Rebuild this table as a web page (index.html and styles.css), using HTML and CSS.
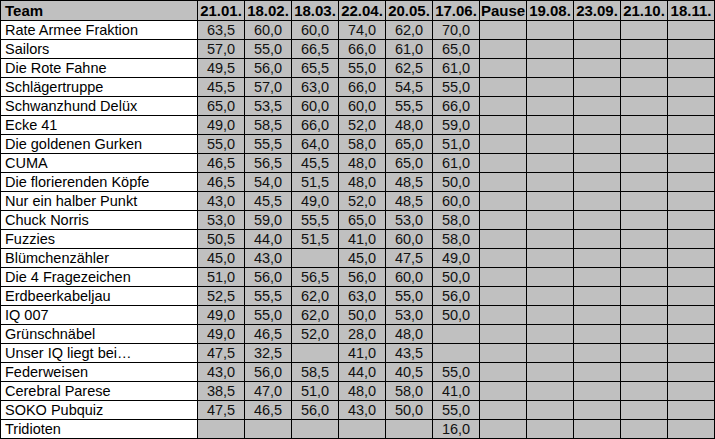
FILE: index.html
```html
<!DOCTYPE html>
<html lang="de">
<head>
<meta charset="utf-8">
<title>Tabelle</title>
<link rel="stylesheet" href="styles.css">
</head>
<body>
<table class="scores">
<colgroup>
<col class="c-team">
<col class="c-num"><col class="c-num"><col class="c-num"><col class="c-num"><col class="c-num"><col class="c-num">
<col class="c-num"><col class="c-num"><col class="c-num"><col class="c-num"><col class="c-num">
</colgroup>
<thead>
<tr class="head">
<th class="team">Team</th><th>21.01.</th><th>18.02.</th><th>18.03.</th><th>22.04.</th><th>20.05.</th><th>17.06.</th><th>Pause</th><th>19.08.</th><th>23.09.</th><th>21.10.</th><th>18.11.</th>
</tr>
</thead>
<tbody>
<tr><td class="team">Rate Armee Fraktion</td><td>63,5</td><td>60,0</td><td>60,0</td><td>74,0</td><td>62,0</td><td>70,0</td><td></td><td></td><td></td><td></td><td></td></tr>
<tr><td class="team">Sailors</td><td>57,0</td><td>55,0</td><td>66,5</td><td>66,0</td><td>61,0</td><td>65,0</td><td></td><td></td><td></td><td></td><td></td></tr>
<tr><td class="team">Die Rote Fahne</td><td>49,5</td><td>56,0</td><td>65,5</td><td>55,0</td><td>62,5</td><td>61,0</td><td></td><td></td><td></td><td></td><td></td></tr>
<tr><td class="team">Schlägertruppe</td><td>45,5</td><td>57,0</td><td>63,0</td><td>66,0</td><td>54,5</td><td>55,0</td><td></td><td></td><td></td><td></td><td></td></tr>
<tr><td class="team">Schwanzhund Delüx</td><td>65,0</td><td>53,5</td><td>60,0</td><td>60,0</td><td>55,5</td><td>66,0</td><td></td><td></td><td></td><td></td><td></td></tr>
<tr><td class="team">Ecke 41</td><td>49,0</td><td>58,5</td><td>66,0</td><td>52,0</td><td>48,0</td><td>59,0</td><td></td><td></td><td></td><td></td><td></td></tr>
<tr><td class="team">Die goldenen Gurken</td><td>55,0</td><td>55,5</td><td>64,0</td><td>58,0</td><td>65,0</td><td>51,0</td><td></td><td></td><td></td><td></td><td></td></tr>
<tr><td class="team">CUMA</td><td>46,5</td><td>56,5</td><td>45,5</td><td>48,0</td><td>65,0</td><td>61,0</td><td></td><td></td><td></td><td></td><td></td></tr>
<tr><td class="team">Die florierenden Köpfe</td><td>46,5</td><td>54,0</td><td>51,5</td><td>48,0</td><td>48,5</td><td>50,0</td><td></td><td></td><td></td><td></td><td></td></tr>
<tr><td class="team">Nur ein halber Punkt</td><td>43,0</td><td>45,5</td><td>49,0</td><td>52,0</td><td>48,5</td><td>60,0</td><td></td><td></td><td></td><td></td><td></td></tr>
<tr><td class="team">Chuck Norris</td><td>53,0</td><td>59,0</td><td>55,5</td><td>65,0</td><td>53,0</td><td>58,0</td><td></td><td></td><td></td><td></td><td></td></tr>
<tr><td class="team">Fuzzies</td><td>50,5</td><td>44,0</td><td>51,5</td><td>41,0</td><td>60,0</td><td>58,0</td><td></td><td></td><td></td><td></td><td></td></tr>
<tr><td class="team">Blümchenzähler</td><td>45,0</td><td>43,0</td><td></td><td>45,0</td><td>47,5</td><td>49,0</td><td></td><td></td><td></td><td></td><td></td></tr>
<tr><td class="team">Die 4 Fragezeichen</td><td>51,0</td><td>56,0</td><td>56,5</td><td>56,0</td><td>60,0</td><td>50,0</td><td></td><td></td><td></td><td></td><td></td></tr>
<tr><td class="team">Erdbeerkabeljau</td><td>52,5</td><td>55,5</td><td>62,0</td><td>63,0</td><td>55,0</td><td>56,0</td><td></td><td></td><td></td><td></td><td></td></tr>
<tr><td class="team">IQ 007</td><td>49,0</td><td>55,0</td><td>62,0</td><td>50,0</td><td>53,0</td><td>50,0</td><td></td><td></td><td></td><td></td><td></td></tr>
<tr><td class="team">Grünschnäbel</td><td>49,0</td><td>46,5</td><td>52,0</td><td>28,0</td><td>48,0</td><td></td><td></td><td></td><td></td><td></td><td></td></tr>
<tr><td class="team">Unser IQ liegt bei…</td><td>47,5</td><td>32,5</td><td></td><td>41,0</td><td>43,5</td><td></td><td></td><td></td><td></td><td></td><td></td></tr>
<tr><td class="team">Federweisen</td><td>43,0</td><td>56,0</td><td>58,5</td><td>44,0</td><td>40,5</td><td>55,0</td><td></td><td></td><td></td><td></td><td></td></tr>
<tr><td class="team">Cerebral Parese</td><td>38,5</td><td>47,0</td><td>51,0</td><td>48,0</td><td>58,0</td><td>41,0</td><td></td><td></td><td></td><td></td><td></td></tr>
<tr><td class="team">SOKO Pubquiz</td><td>47,5</td><td>46,5</td><td>56,0</td><td>43,0</td><td>50,0</td><td>55,0</td><td></td><td></td><td></td><td></td><td></td></tr>
<tr><td class="team">Tridioten</td><td></td><td></td><td></td><td></td><td></td><td>16,0</td><td></td><td></td><td></td><td></td><td></td></tr>
</tbody>
</table>
</body>
</html>
```

FILE: styles.css
```css
html, body {
  margin: 0;
  padding: 0;
  background: #ffffff;
}

.scores {
  width: 715px;
  table-layout: fixed;
  border-collapse: collapse;
  border: 1px solid #000;
  font-family: "Liberation Sans", Arial, sans-serif;
  font-size: 14.5px;
  color: #111;
}

.c-team {
  width: 197px;
}

.c-num {
  width: 47px;
}

.scores th,
.scores td {
  border: 1px solid #000;
  padding: 0;
  background: #c0c0c0;
  text-align: center;
  white-space: nowrap;
  overflow: hidden;
  line-height: 17px;
}

.scores .head {
  height: 20px;
}

.scores tbody tr {
  height: 19px;
}

.scores th {
  font-weight: bold;
  font-size: 15px;
  color: #000;
}

.scores th.team {
  text-align: left;
  padding-left: 4px;
}

.scores td.team {
  background: #ffffff;
  text-align: left;
  padding-left: 4px;
  color: #000;
}
```
